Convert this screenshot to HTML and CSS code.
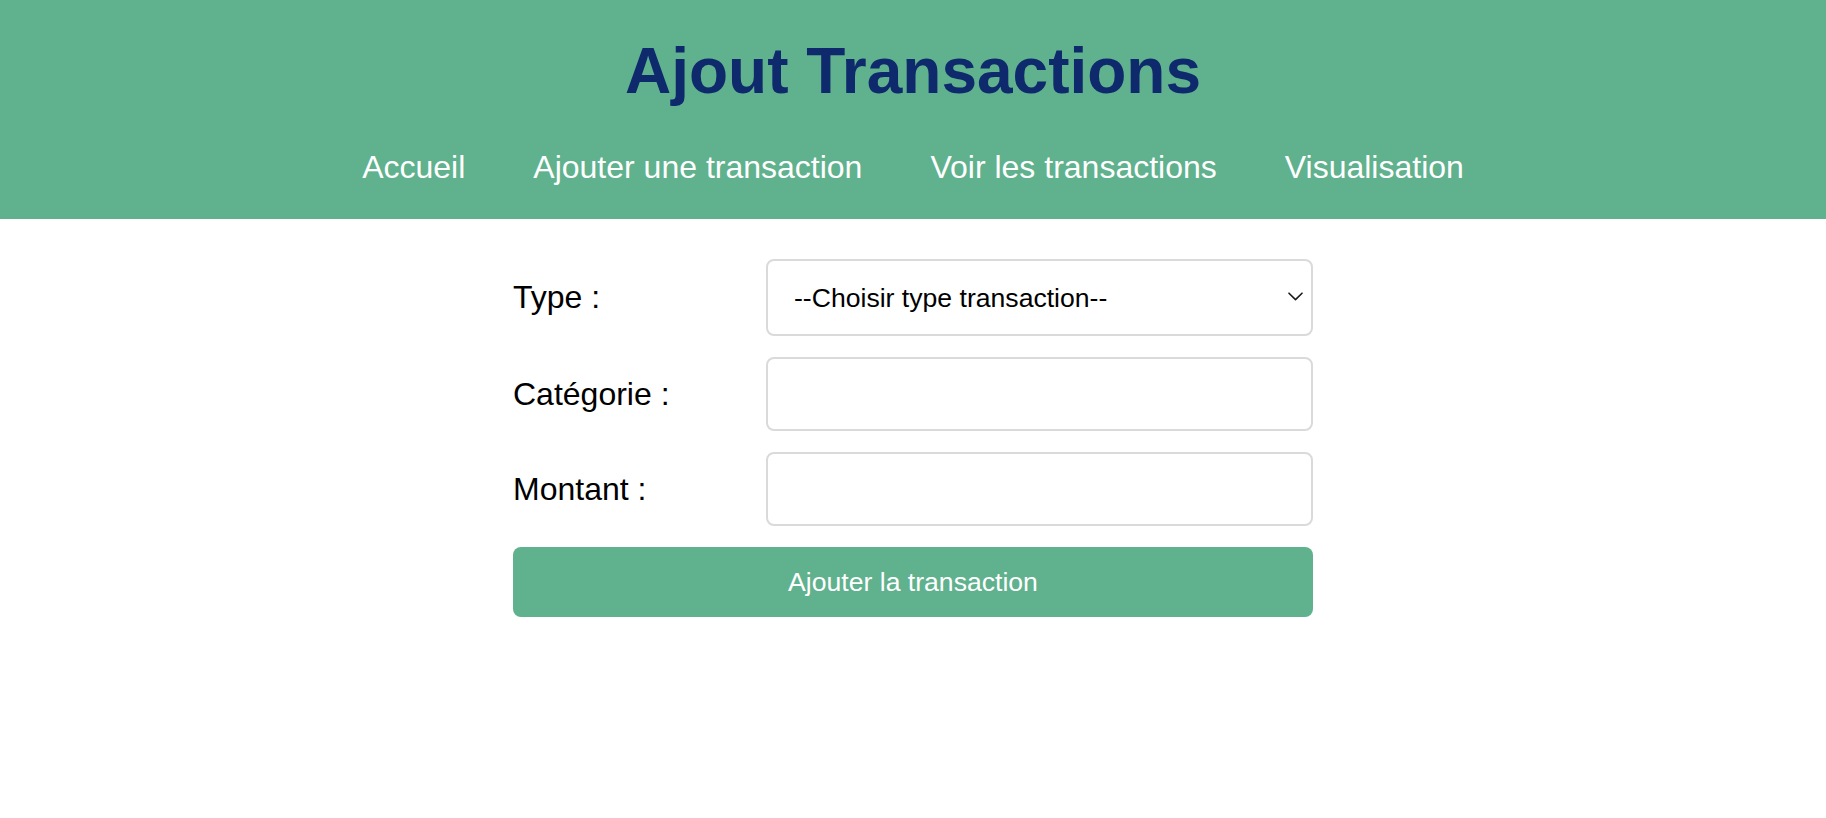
FILE: index.html
```html
<!DOCTYPE html>
<html lang="fr">
<head>
<meta charset="utf-8">
<title>Ajout Transactions</title>
<link rel="stylesheet" href="styles.css">
</head>
<body>
<header class="site-header">
  <h1 class="site-title">Ajout Transactions</h1>
  <nav class="site-nav">
    <a href="#" class="nav-link">Accueil</a>
    <a href="#" class="nav-link">Ajouter une transaction</a>
    <a href="#" class="nav-link">Voir les transactions</a>
    <a href="#" class="nav-link">Visualisation</a>
  </nav>
</header>
<main class="content">
  <form class="tx-form">
    <label class="field-label" for="type">Type :</label>
    <div class="select-wrap">
      <select id="type" class="field-select">
        <option>--Choisir type transaction--</option>
        <option>Revenu</option>
        <option>Dépense</option>
      </select>
      <svg class="select-chevron" width="15" height="9" viewBox="0 0 15 9" aria-hidden="true">
        <path d="M1 1.2 L7.5 7.6 L14 1.2" fill="none" stroke="#1a1a1a" stroke-width="1.6" stroke-linecap="round" stroke-linejoin="round"/>
      </svg>
    </div>
    <label class="field-label" for="cat">Catégorie :</label>
    <input id="cat" class="field-input" type="text">
    <label class="field-label" for="montant">Montant :</label>
    <input id="montant" class="field-input" type="text">
    <button type="button" class="submit-btn">Ajouter la transaction</button>
  </form>
</main>
</body>
</html>
```
FILE: styles.css
```css
* { box-sizing: border-box; }

body {
  margin: 0;
  font-family: "Liberation Sans", Arial, Helvetica, sans-serif;
  background: #ffffff;
  color: #000000;
}

.site-header {
  background: #60b18d;
  padding: 34px 0 33px;
  text-align: center;
}

.site-title {
  margin: 0 0 41px;
  font-size: 64px;
  line-height: 74px;
  font-weight: bold;
  color: #0f2a6c;
}

.site-nav {
  display: flex;
  justify-content: center;
  gap: 68px;
}

.nav-link {
  font-size: 32px;
  line-height: 37px;
  color: #ffffff;
  text-decoration: none;
}

.content {
  padding-top: 40px;
}

.tx-form {
  width: 800px;
  margin: 0 auto;
  display: grid;
  grid-template-columns: 253px 1fr;
  row-gap: 21px;
  align-items: center;
}

.field-label {
  font-size: 32px;
  color: #000000;
}

.select-wrap {
  position: relative;
}

.field-select {
  display: block;
  width: 100%;
  height: 77px;
  appearance: none;
  -webkit-appearance: none;
  background: #ffffff;
  border: 2px solid #dadada;
  border-radius: 8px;
  padding: 0 40px 0 26px;
  font-family: "Liberation Sans", Arial, sans-serif;
  font-size: 26.6px;
  color: #000000;
}

.select-chevron {
  position: absolute;
  right: 10px;
  top: 33px;
  pointer-events: none;
}

.field-input {
  display: block;
  width: 100%;
  height: 74px;
  background: #ffffff;
  border: 2px solid #dadada;
  border-radius: 8px;
  padding: 0 20px;
  font-family: "Liberation Sans", Arial, sans-serif;
  font-size: 26px;
}

.submit-btn {
  grid-column: 1 / -1;
  height: 70px;
  border: none;
  border-radius: 8px;
  background: #60b18d;
  color: #ffffff;
  font-family: "Liberation Sans", Arial, sans-serif;
  font-size: 26.6px;
  cursor: pointer;
}
```
